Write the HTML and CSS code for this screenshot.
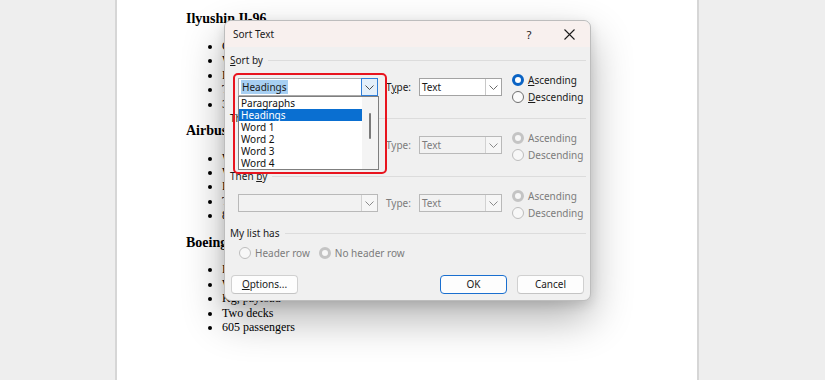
FILE: index.html
```html
<!DOCTYPE html>
<html>
<head>
<meta charset="utf-8">
<link rel="stylesheet" href="styles.css">
</head>
<body>
<div class="app">
  <div class="side"></div>
  <div class="page">
    <h2 class="doc-h">Ilyushin Il-96</h2>
    <ul class="doc-list">
      <li>Cruise speed 870 km/h</li>
      <li>Wide-body</li>
      <li>Four engines</li>
      <li>Two aisles</li>
      <li>300 passengers</li>
    </ul>
    <h2 class="doc-h">Airbus A380</h2>
    <ul class="doc-list">
      <li>Wide-body</li>
      <li>Wingspan 79.8 m</li>
      <li>Four engines</li>
      <li>Two decks</li>
      <li>853 passengers</li>
    </ul>
    <h2 class="doc-h">Boeing 747-8</h2>
    <ul class="doc-list">
      <li>Four engines</li>
      <li>Wide-body</li>
      <li>Kg, payload</li>
      <li>Two decks</li>
      <li>605 passengers</li>
    </ul>
  </div>
  <div class="side"></div>
</div>

<div class="dialog">
  <div class="titlebar">
    <div class="title">Sort Text</div>
    <div class="tb-btn help">?</div>
    <div class="tb-btn close">
      <svg width="11" height="11" viewBox="0 0 11 11"><path d="M0.5 0.5 L10.5 10.5 M10.5 0.5 L0.5 10.5" stroke="#1b1b1b" stroke-width="1.1" fill="none"/></svg>
    </div>
  </div>
  <div class="body">
    <div class="group">
      <div class="ghead"><span class="acc">Sort by</span><span class="rule"></span></div>
      <div class="row">
        <div class="combo sortcombo open">
          <span class="val"><span class="sel">Headings</span></span>
          <span class="drop active"><svg width="9" height="5" viewBox="0 0 9 5"><path d="M0.5 0.5 L4.5 4.5 L8.5 0.5" stroke="#4a4a4a" fill="none"/></svg></span>
        </div>
        <span class="tlabel">T<u>y</u>pe:</span>
        <div class="combo typecombo">
          <span class="val">Text</span>
          <span class="drop"><svg width="9" height="5" viewBox="0 0 9 5"><path d="M0.5 0.5 L4.5 4.5 L8.5 0.5" stroke="#6a6a6a" fill="none"/></svg></span>
        </div>
        <div class="radios">
          <div class="radio"><span class="dot on"></span><span class="acc">Ascending</span></div>
          <div class="radio"><span class="dot"></span><span class="acc">Descending</span></div>
        </div>
      </div>
    </div>

    <div class="group disabled">
      <div class="ghead"><span>Then by</span><span class="rule"></span></div>
      <div class="row">
        <div class="combo sortcombo">
          <span class="val">(none)</span>
          <span class="drop"><svg width="9" height="5" viewBox="0 0 9 5"><path d="M0.5 0.5 L4.5 4.5 L8.5 0.5" stroke="#8a8a8a" fill="none"/></svg></span>
        </div>
        <span class="tlabel">Type:</span>
        <div class="combo typecombo">
          <span class="val">Text</span>
          <span class="drop"><svg width="9" height="5" viewBox="0 0 9 5"><path d="M0.5 0.5 L4.5 4.5 L8.5 0.5" stroke="#8a8a8a" fill="none"/></svg></span>
        </div>
        <div class="radios">
          <div class="radio"><span class="dot on"></span><span>Ascending</span></div>
          <div class="radio"><span class="dot"></span><span>Descending</span></div>
        </div>
      </div>
    </div>

    <div class="group disabled">
      <div class="ghead"><span>Then <u>b</u>y</span><span class="rule"></span></div>
      <div class="row">
        <div class="combo sortcombo">
          <span class="val"></span>
          <span class="drop"><svg width="9" height="5" viewBox="0 0 9 5"><path d="M0.5 0.5 L4.5 4.5 L8.5 0.5" stroke="#8a8a8a" fill="none"/></svg></span>
        </div>
        <span class="tlabel">Type:</span>
        <div class="combo typecombo">
          <span class="val">Text</span>
          <span class="drop"><svg width="9" height="5" viewBox="0 0 9 5"><path d="M0.5 0.5 L4.5 4.5 L8.5 0.5" stroke="#8a8a8a" fill="none"/></svg></span>
        </div>
        <div class="radios">
          <div class="radio"><span class="dot on"></span><span>Ascending</span></div>
          <div class="radio"><span class="dot"></span><span>Descending</span></div>
        </div>
      </div>
    </div>

    <div class="group listhas">
      <div class="ghead"><span>My list has</span><span class="rule"></span></div>
      <div class="hrow disabled">
        <div class="radio"><span class="dot"></span><span>Header row</span></div>
        <div class="radio"><span class="dot on"></span><span>No header row</span></div>
      </div>
    </div>

    <div class="buttons">
      <div class="btn"><span class="acc">Options...</span></div>
      <div class="spacer"></div>
      <div class="btn default">OK</div>
      <div class="btn">Cancel</div>
    </div>
  </div>

  <div class="dropdown">
    <div class="items">
      <div class="item">Paragraphs</div>
      <div class="item selected">Headings</div>
      <div class="item">Word 1</div>
      <div class="item">Word 2</div>
      <div class="item">Word 3</div>
      <div class="item">Word 4</div>
    </div>
    <div class="scroll"><span class="thumb"></span></div>
  </div>
  <div class="highlight"></div>
</div>
</body>
</html>
```

FILE: styles.css
```css
* { box-sizing: border-box; }
html, body { margin: 0; padding: 0; }
body {
  width: 825px;
  height: 380px;
  overflow: hidden;
  background: #eeeeee;
  position: relative;
}
.app {
  display: flex;
  height: 380px;
}
.side {
  flex: 1;
  background: #eeeeee;
}
.side:first-child { flex: 0 0 115px; }
.page {
  flex: 0 0 584px;
  background: #ffffff;
  border-left: 2px solid #d6d6d6;
  border-right: 2px solid #d6d6d6;
  padding: 11px 0 0 69px;
  font-family: "Liberation Serif", "Times New Roman", serif;
  color: #000;
}
.doc-h {
  margin: 0;
  font-size: 14px;
  line-height: 16px;
  font-weight: bold;
}
.doc-list {
  margin: 11.75px 0;
  padding-left: 36px;
  font-size: 12px;
  line-height: 14.45px;
}

/* dialog */
.dialog {
  position: absolute;
  left: 224px;
  top: 20px;
  width: 367px;
  height: 281px;
  background: #f0f0f0;
  border: 1px solid #bdbdbd;
  border-radius: 7px;
  box-shadow: 0 18px 42px rgba(0,0,0,0.30), 0 4px 12px rgba(0,0,0,0.12);
  font-family: "Noto Sans", "Open Sans", sans-serif;
  font-size: 10px;
  color: #1a1a1a;
}
.titlebar {
  height: 26px;
  display: flex;
  align-items: center;
  background: #f8f0ee;
  border-radius: 7px 7px 0 0;
}
.title {
  flex: 1;
  padding-left: 8px;
  font-size: 10px;
  color: #1a1a1a;
}
.tb-btn {
  height: 26px;
  display: flex;
  align-items: center;
  justify-content: center;
}
.help { width: 40px; font-size: 11.5px; color: #1a1a1a; }
.close { width: 41px; }

/* access-key underline on the first letter */
.acc { display: inline-block; }
.acc::first-letter { text-decoration: underline; }

.body {
  padding: 6px 4px 0 5px;
}
.ghead {
  height: 14px;
  display: flex;
  align-items: center;
  line-height: 14px;
}
.ghead .rule {
  flex: 1;
  margin-left: 5px;
  border-top: 1px solid #dcdcdc;
  height: 0;
}
.group + .group { margin-top: 5px; }
.group.listhas { margin-top: 4px; }
.row {
  display: flex;
  align-items: flex-start;
  padding: 11px 0 0 8px;
}
.combo {
  height: 18px;
  display: flex;
  background: #ffffff;
  border: 1px solid #a3a3a3;
}
.combo .val {
  flex: 1;
  padding-left: 2px;
  line-height: 16px;
  white-space: nowrap;
  overflow: hidden;
}
.combo .drop {
  width: 16px;
  border-left: 1px solid #c8c8c8;
  display: flex;
  align-items: center;
  justify-content: center;
}
.combo .drop.active {
  background: #e3effa;
  border: 1px solid #2f7ed8;
  margin: -1px -1px -1px 0;
  width: 17px;
}
.sortcombo { width: 140px; }
.sortcombo.open { border-color: #a9a9a9; }
.sel {
  background: #a7cff2;
  padding: 0 1px;
}
.typecombo { width: 83px; }
.tlabel {
  margin: 0 8px 0 8px;
  line-height: 18px;
  width: 25px;
}
.radios {
  margin: -7px 0 0 10px;
}
.radio {
  height: 17.5px;
  display: flex;
  align-items: center;
  gap: 4px;
}
.dot {
  width: 12px;
  height: 12px;
  border-radius: 50%;
  border: 1px solid #6e6e6e;
  background: #fbfbfb;
}
.dot.on {
  border: 3px solid #0a63c4;
  background: #ffffff;
}
.disabled { color: #7c7c7c; }
.group.disabled > .ghead { color: #1a1a1a; }
.disabled .combo {
  background: #f2f2f2;
  border-color: #b9b9b9;
}
.disabled .combo .drop { border-left-color: #d2d2d2; background: #f6f6f6; }
.disabled .dot { border-color: #bdbdbd; background: #f7f7f7; }
.disabled .dot.on { border: 3px solid #c4c4c4; background: #f7f7f7; }

.hrow {
  display: flex;
  gap: 9px;
  padding: 4px 0 0 9px;
}
.buttons {
  display: flex;
  gap: 10px;
  margin-top: 13px;
  padding-left: 1px;
  padding-right: 2px;
}
.spacer { flex: 1; }
.btn {
  width: 67px;
  height: 19px;
  background: #fdfdfd;
  border: 1px solid #d0d0d0;
  border-bottom-color: #c4c4c4;
  border-radius: 4px;
  display: flex;
  align-items: center;
  justify-content: center;
  color: #1a1a1a;
}
.btn.default {
  border: 1px solid #1a6fcf;
}

/* open dropdown list */
.dropdown {
  position: absolute;
  left: 13px;
  top: 75px;
  width: 141px;
  height: 74px;
  background: #ffffff;
  border: 1px solid #7f7f7f;
  display: flex;
}
.items { flex: 1; }
.item {
  height: 12px;
  line-height: 12px;
  padding-left: 2px;
  color: #101010;
}
.item.selected {
  background: #0a6fd1;
  color: #ffffff;
}
.scroll {
  width: 16px;
  background: #f4f4f4;
  position: relative;
}
.thumb {
  position: absolute;
  left: 7px;
  top: 16px;
  width: 2px;
  height: 26px;
  background: #7a7a7a;
  border-radius: 1px;
}
.highlight {
  position: absolute;
  left: 8px;
  top: 52px;
  width: 154px;
  height: 101px;
  border: 2px solid #e8141e;
  border-radius: 5px;
}
```
